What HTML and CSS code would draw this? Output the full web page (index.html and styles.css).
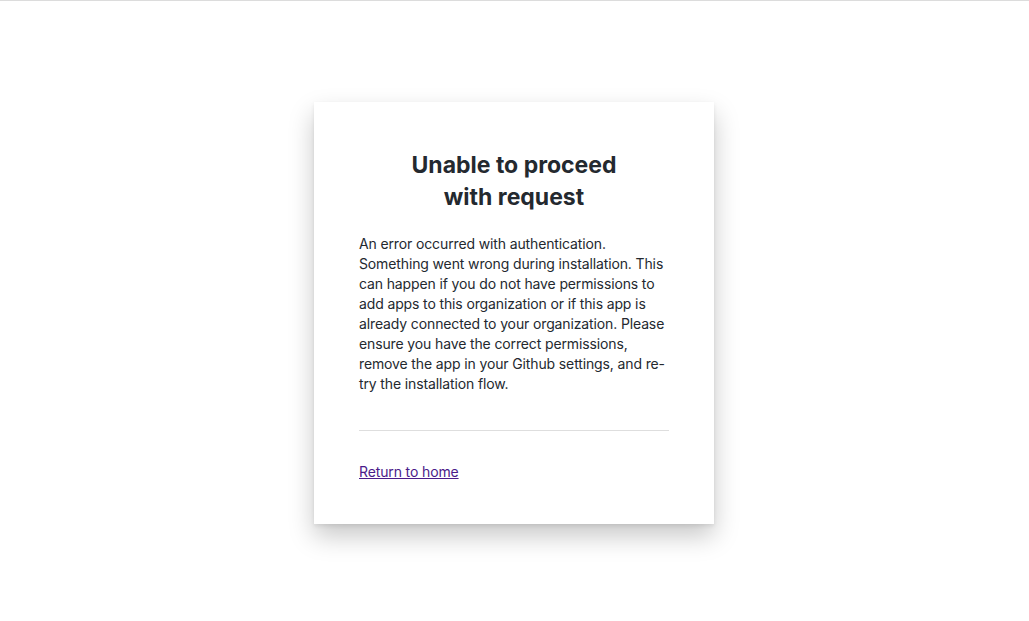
FILE: index.html
```html
<!DOCTYPE html>
<html lang="en">
<head>
<meta charset="utf-8">
<title>Unable to proceed with request</title>
<link rel="stylesheet" href="styles.css">
</head>
<body>
<main class="page">
  <section class="card">
    <h1 class="title">Unable to proceed<br>with request</h1>
    <p class="message">An error occurred with authentication. Something went wrong during installation. This can happen if you do not have permissions to add apps to this organization or if this app is already connected to your organization. Please ensure you have the correct permissions, remove the app in your Github settings, and re-try the installation flow.</p>
    <hr class="divider">
    <a class="home-link" href="#">Return to home</a>
  </section>
</main>
</body>
</html>
```

FILE: styles.css
```css
html, body {
  margin: 0;
  padding: 0;
  background: #fff;
}
body {
  font-family: Inter, "Liberation Sans", sans-serif;
  color: #24292f;
  border-top: 1px solid #dcdcdc;
  min-height: 620px;
}
.page {
  display: flex;
  justify-content: center;
  padding-top: 101px;
  padding-right: 1px;
}
.card {
  width: 310px;
  padding: 47px 45px 42px;
  background: #fff;
  box-shadow: 0 12px 24px rgba(0, 0, 0, 0.22), 0 2px 4px rgba(0, 0, 0, 0.08);
}
.title {
  margin: 0;
  font-size: 23px;
  line-height: 32px;
  font-weight: 700;
  text-align: center;
  color: #24292f;
}
.message {
  margin: 21px 0 0;
  font-size: 14px;
  line-height: 20px;
  letter-spacing: -0.13px;
  color: #24292f;
}
.divider {
  margin: 36px 0 0;
  border: 0;
  border-top: 1px solid #dedede;
  height: 0;
}
.home-link {
  display: inline-block;
  margin-top: 31px;
  font-size: 14px;
  line-height: 20px;
  letter-spacing: -0.13px;
  color: #4b1b8a;
  text-decoration: underline;
}
```
